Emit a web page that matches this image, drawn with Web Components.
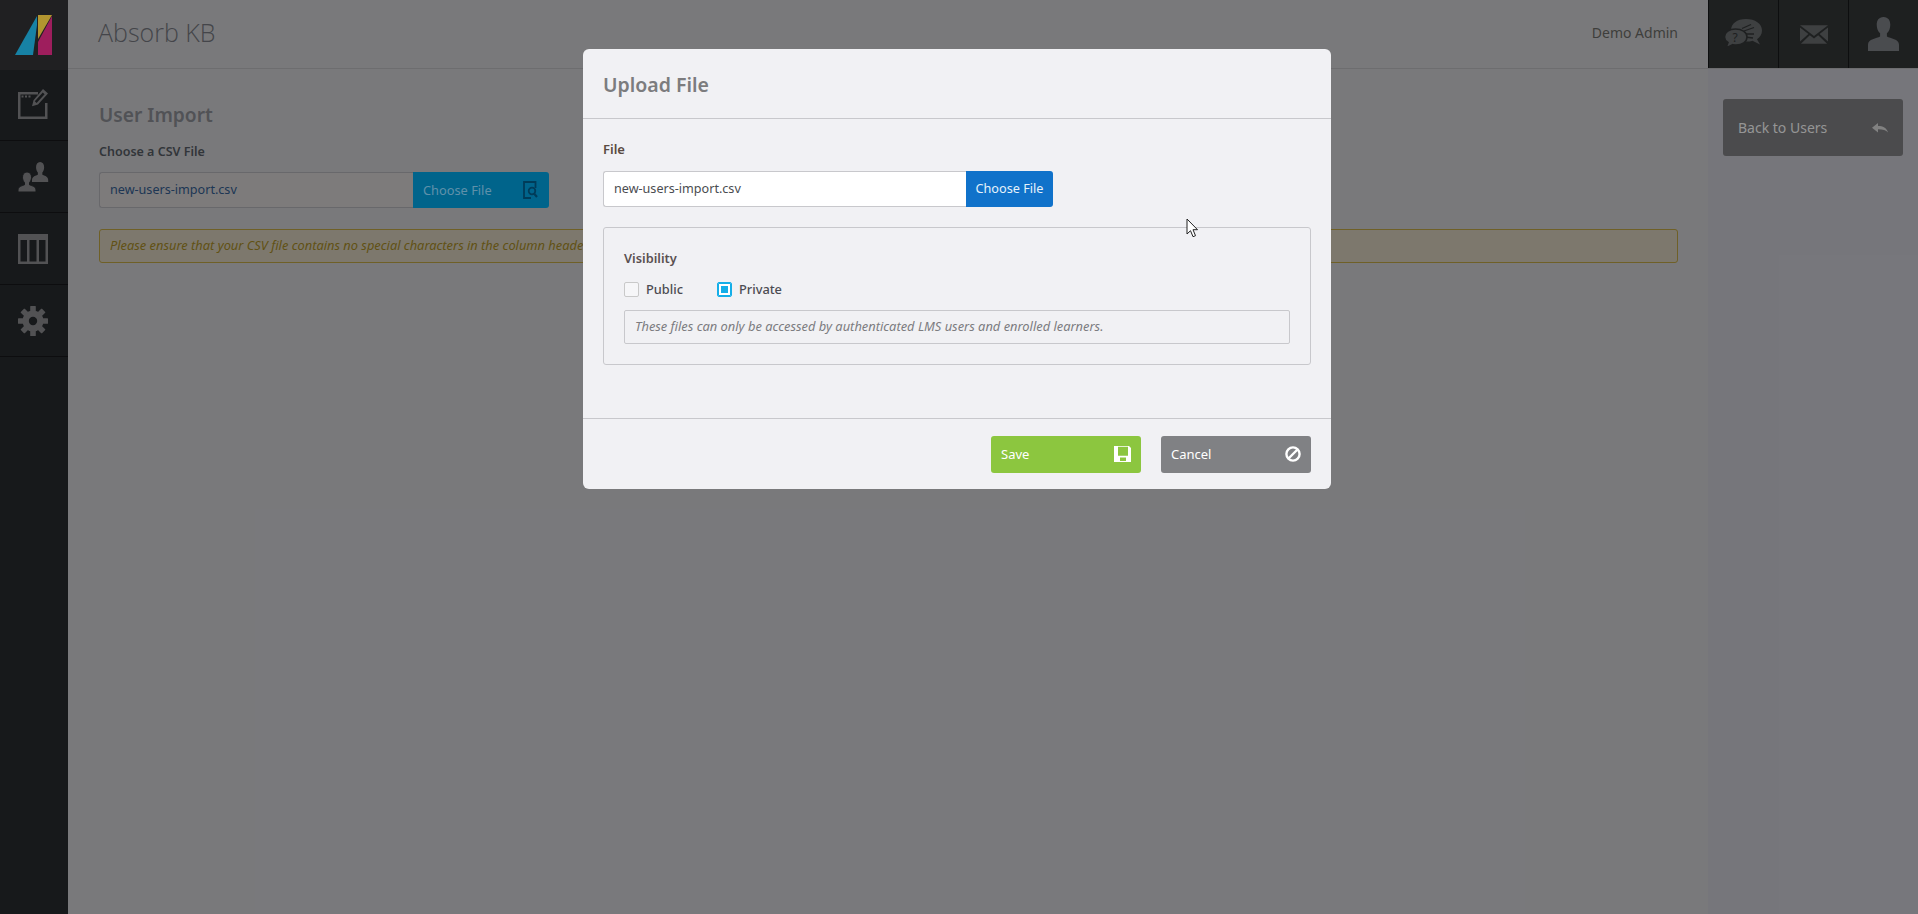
<!DOCTYPE html>
<html lang="en">
<head>
<meta charset="utf-8">
<title>Absorb KB - Upload File</title>
<style>
  html, body { margin: 0; height: 100%; overflow: hidden; background: #aeaeb1; }
  body { font-family: "Noto Sans", "Open Sans", sans-serif; }
</style>
</head>
<body>
<app-shell>
  <side-nav slot="nav"></side-nav>
  <top-bar slot="top"></top-bar>
  <user-import slot="main"></user-import>
  <back-panel slot="aside"></back-panel>
</app-shell>
<modal-dialog heading="Upload File">
  <file-field label="File" value="new-users-import.csv"></file-field>
  <visibility-box></visibility-box>
  <action-button slot="footer" kind="save">Save</action-button>
  <action-button slot="footer" kind="cancel">Cancel</action-button>
</modal-dialog>

<script>
const BUST = "M9 0c3 0 4.500 2.300 4.500 5.300 0 2.200-.8 4-2 5.200v2.300c2 1 6.500 1.500 6.500 5.200V20H0v-2c0-3.700 4.500-4.200 6.500-5.200v-2.300C5.300 9.300 4.500 7.500 4.500 5.300 4.500 2.300 6 0 9 0z";
const GEAR_TOOTH = `x="-2.800" y="-15" width="5.600" height="30" rx=".6"`;

const ICONS = {
  compose: `<svg width="30" height="30" viewBox="0 0 30 30"><path fill="#767679" d="M0 3h20v2.500H0zM0 3h2.500v27H0zM27 14h2.500v16H0v-2.500h27z"/><path fill="#767679" d="M3.500 6.500h2v2h-2zM7 6.500h2v2H7zM10.500 6.500h2v2h-2z"/><path fill="#767679" fill-rule="evenodd" d="M25 0l5 4.500-10 11-6 1.800 1.500-6zM24.800 3.500l-8 8.800 1.800 1.700 8-8.800z"/></svg>`,
  users: `<svg width="31" height="30" viewBox="0 0 31 30"><path fill="#767679" transform="translate(14 0) scale(.9 1)" d="${BUST}"/><path fill="#767679" stroke="#212427" stroke-width="1" transform="translate(0 10)" d="${BUST}"/></svg>`,
  columns: `<svg width="30" height="30" viewBox="0 0 30 30"><path fill="#767679" fill-rule="evenodd" d="M0 0h30v30H0zM2.500 6v21.500h6.500V6zM11.500 6v21.500h7V6zM21 6v21.500h6.500V6z"/></svg>`,
  gear: `<svg width="30" height="30" viewBox="-15 -15 30 30"><g fill="#767679"><rect ${GEAR_TOOTH}/><rect ${GEAR_TOOTH} transform="rotate(45)"/><rect ${GEAR_TOOTH} transform="rotate(90)"/><rect ${GEAR_TOOTH} transform="rotate(135)"/></g><circle r="10.500" fill="#767679"/><circle r="4.200" fill="#212427"/></svg>`,
  chat: `<svg width="40" height="30" viewBox="0 0 40 30"><path fill="#595c5e" d="M22 0c9 0 16 4.700 16 11.500 0 3.800-2 6.700-5 8.700l3 5.300-7.500-3.800c-2 .6-4 .9-6.500.9C13 22.600 7 18 7 11.500 7 4.700 13 0 22 0z"/><path stroke="#2c2e2f" stroke-width="1.300" d="M18 9.500l9-4M20 12l10-3.500M21 15h9M21 18l8 1" fill="none"/><path fill="#595c5e" stroke="#2c2e2f" stroke-width="1.500" d="M11.500 10C17.500 10 23 13 23 18c0 5-5 8-11 8-1 0-2.200-.1-3.200-.4L2 29l2-5.500C1.500 22 .5 20 .5 18c0-5 5-8 11-8z"/><text x="8.500" y="23" font-size="12" font-family="Noto Sans, sans-serif" fill="#2c2e2f">?</text></svg>`,
  mail: `<svg width="28" height="19" viewBox="0 0 30 20"><path fill="#595c5e" d="M0 0h30L15 11.500zM0 2.500l9 7L0 17.500zM30 2.500l-9 7 9 8zM10.500 10.800l4.500 3.500 4.500-3.500L29 20H1z"/></svg>`,
  user: `<svg width="31" height="34" viewBox="0 0 32 35"><path fill="#6b6e72" d="M16 0c5 0 7 3.800 7 8 0 3.700-1.300 6.800-3.500 8.800v3.200c3.500 2 12.500 2.500 12.500 8.500V35H0v-6.500C0 22.500 9 22 12.500 20v-3.200C10.300 14.800 9 11.700 9 8c0-4.200 2-8 7-8z"/></svg>`,
  back: `<svg width="16" height="10" viewBox="0 0 16 10"><path fill="#b9b9b9" d="M6 0v3c5 0 8.500 1.500 10 6.500C14 7 11 6.300 6 6.300V9.500L0 4.800z"/></svg>`,
  search: `<svg width="15" height="18" viewBox="0 0 15 18"><path fill="none" stroke="#005680" stroke-width="1.800" d="M12.500 7V1H1v16h7"/><circle cx="9" cy="10" r="3.300" fill="none" stroke="#005680" stroke-width="1.800"/><path stroke="#005680" stroke-width="2.200" d="M11 12.500l3 3.500"/></svg>`,
  save: `<svg width="17" height="16" viewBox="0 0 17 16"><path fill="#fff" fill-rule="evenodd" d="M0 0h15l2 2v14H0zM4 .8v9h10v-9zM6 11.500V15h6v-3.500z"/></svg>`,
  cancel: `<svg width="16" height="16" viewBox="0 0 16 16"><circle cx="8" cy="8" r="6.600" fill="none" stroke="#fff" stroke-width="2.400"/><path stroke="#fff" stroke-width="2.400" d="M3.500 12.500l9-9"/></svg>`,
};

class AppShell extends HTMLElement {
  constructor() {
    super();
    this.attachShadow({ mode: "open" });
    this.shadowRoot.innerHTML = `
      <style>
        :host { display: grid; grid-template-columns: 68px 1fr 210px; grid-template-rows: 69px 1fr; width: 1918px; height: 914px; }
        ::slotted([slot="nav"]) { grid-row: 1 / 3; }
        ::slotted([slot="top"]) { grid-column: 2 / 4; }
      </style>
      <slot name="nav"></slot>
      <slot name="top"></slot>
      <slot name="main"></slot>
      <slot name="aside"></slot>`;
  }
}

class SideNav extends HTMLElement {
  constructor() {
    super();
    this.attachShadow({ mode: "open" });
    this.shadowRoot.innerHTML = `
      <style>
        :host { display: flex; flex-direction: column; background: #212427; }
        .logo { height: 70px; flex: none; background: #2e2f31; display: flex; align-items: center; justify-content: center; }
        .item { height: 72px; flex: none; box-sizing: border-box; padding-right: 2px; border-bottom: 1px solid #131416; display: flex; align-items: center; justify-content: center; }
        .first { height: 71px; }
        .first svg { margin-top: -3px; }
      </style>
      <div class="logo">
        <svg width="38" height="40" viewBox="0 0 38 40">
          <path fill="#22baec" d="M22 1v9l-4 30H0z"/>
          <path fill="#ffd645" d="M23 0h14L23 24z"/>
          <path fill="#e22c86" d="M37 1v39H23V27z"/>
        </svg>
      </div>
      <div class="item first">${ICONS.compose}</div>
      <div class="item">${ICONS.users}</div>
      <div class="item">${ICONS.columns}</div>
      <div class="item">${ICONS.gear}</div>`;
  }
}

class TopBar extends HTMLElement {
  constructor() {
    super();
    this.attachShadow({ mode: "open" });
    this.shadowRoot.innerHTML = `
      <style>
        :host { display: flex; align-items: stretch; height: 69px; box-sizing: border-box; border-bottom: 1px solid #9c9c9f; background: #aeaeb1; }
        h1 { margin: 0 0 0 30px; flex: 1; font: 300 25px/64px "Open Sans", sans-serif; color: #62646a; }
        .who { font-size: 14px; line-height: 66px; color: #5a5a56; margin-right: 30px; }
        .tile { width: 70px; height: 68px; background: #2c2e2f; border-left: 1px solid #141516; box-sizing: border-box; display: flex; align-items: center; justify-content: center; }
        .tile:first-of-type { border-left: 0; }
      </style>
      <h1>Absorb KB</h1>
      <div class="who">Demo Admin</div>
      <div class="tile">${ICONS.chat}</div>
      <div class="tile">${ICONS.mail}</div>
      <div class="tile">${ICONS.user}</div>`;
  }
}

class UserImport extends HTMLElement {
  constructor() {
    super();
    this.attachShadow({ mode: "open" });
    this.shadowRoot.innerHTML = `
      <style>
        :host { display: block; padding: 32px 30px 0 31px; background: #aeaeb1; }
        h2 { margin: 0; font-size: 19.2px; line-height: 28px; font-weight: 600; color: #74767c; }
        label { display: block; margin-top: 13px; font-size: 12.5px; line-height: 20px; font-weight: 600; color: #484d53; }
        .row { display: flex; margin-top: 10px; height: 36px; }
        .val { width: 314px; box-sizing: border-box; background: #b4b1b1; border: 1px solid #96969a; border-right: 0; border-radius: 3px 0 0 3px; padding-left: 10px; font-size: 12.6px; line-height: 34px; color: #2b4e79; }
        .btn { width: 136px; background: #0090c8; border-radius: 0 3px 3px 0; display: flex; align-items: center; justify-content: space-between; padding: 0 11px 0 10px; box-sizing: border-box; font-size: 12.8px; color: #88cff3; }
        .btn svg { display: block; }
        .alert { margin-top: 21px; height: 34px; box-sizing: border-box; border: 1px solid #a08a38; border-radius: 3px; background: #b3ad9c; padding-left: 10px; font-size: 12.85px; line-height: 31px; font-style: italic; color: #8c7420; white-space: nowrap; overflow: hidden; }
      </style>
      <h2>User Import</h2>
      <label>Choose a CSV File</label>
      <div class="row">
        <div class="val">new-users-import.csv</div>
        <div class="btn">Choose File ${ICONS.search}</div>
      </div>
      <div class="alert">Please ensure that your CSV file contains no special characters in the column headers.</div>`;
  }
}

class BackPanel extends HTMLElement {
  constructor() {
    super();
    this.attachShadow({ mode: "open" });
    this.shadowRoot.innerHTML = `
      <style>
        :host { display: block; padding: 30px 15px 0 15px; background: #aaaab1; }
        .btn { height: 57px; border-radius: 3px; background: #6c6c6f; display: flex; align-items: center; justify-content: space-between; padding: 0 15px; box-sizing: border-box; font-size: 14px; color: #d6d6d6; }
      </style>
      <div class="btn"><span>Back to Users</span>${ICONS.back}</div>`;
  }
}

class FileField extends HTMLElement {
  constructor() {
    super();
    this.attachShadow({ mode: "open" });
    this.shadowRoot.innerHTML = `
      <style>
        :host { display: block; }
        label { display: block; font-size: 13px; line-height: 18px; font-weight: 600; color: #5a4a42; }
        .row { display: flex; margin-top: 13px; height: 36px; }
        .val { width: 363px; box-sizing: border-box; background: #fff; border: 1px solid #c8c8cc; border-right: 0; border-radius: 3px 0 0 3px; padding-left: 10px; font-size: 12.6px; line-height: 33px; color: #4a4c50; }
        .btn { width: 87px; background: #1072ca; border-radius: 0 3px 3px 0; text-align: center; font-size: 12.7px; line-height: 34px; color: #e6f2fb; }
      </style>
      <label>${this.getAttribute("label")}</label>
      <div class="row">
        <div class="val">${this.getAttribute("value")}</div>
        <div class="btn">Choose File</div>
      </div>`;
  }
}

class CheckOption extends HTMLElement {
  constructor() {
    super();
    this.attachShadow({ mode: "open" });
    this.shadowRoot.innerHTML = `
      <style>
        :host { display: inline-flex; align-items: center; gap: 7px; font-size: 12.8px; font-weight: 500; color: #4c4c52; }
        .box { width: 13px; height: 13px; border: 1px solid #c9c9c9; border-radius: 2px; background: #f6f6f8; box-sizing: content-box; display: flex; align-items: center; justify-content: center; }
        :host([checked]) .box { border: 1px solid #14aee8; box-shadow: inset 0 0 0 1px #14aee8; background: #fff; }
        :host([checked]) .box::after { content: ""; width: 7px; height: 7px; background: #14aee8; }
      </style>
      <span class="box"></span><slot></slot>`;
  }
}

class VisibilityBox extends HTMLElement {
  constructor() {
    super();
    this.attachShadow({ mode: "open" });
    this.shadowRoot.innerHTML = `
      <style>
        :host { display: block; margin-top: 20px; height: 138px; box-sizing: border-box; border: 1px solid #c8c8cc; border-radius: 3px; padding: 21px 20px 0 20px; }
        .title { font-size: 12.8px; line-height: 18px; font-weight: 600; color: #5a5050; }
        .opts { display: flex; gap: 34px; margin-top: 12px; height: 20px; align-items: center; }
        .note { margin-top: 11px; height: 34px; box-sizing: border-box; border: 1px solid #c8c8cc; border-radius: 2px; padding-left: 10px; font-size: 12.87px; line-height: 30px; font-style: italic; color: #7c7c80; }
      </style>
      <div class="title">Visibility</div>
      <div class="opts">
        <check-option>Public</check-option>
        <check-option checked>Private</check-option>
      </div>
      <div class="note">These files can only be accessed by authenticated LMS users and enrolled learners.</div>`;
  }
}

class ActionButton extends HTMLElement {
  constructor() {
    super();
    this.attachShadow({ mode: "open" });
    const kind = this.getAttribute("kind");
    this.shadowRoot.innerHTML = `
      <style>
        :host { display: flex; align-items: center; justify-content: space-between; width: 150px; height: 37px; box-sizing: border-box; padding: 0 10px 2px; border-radius: 3px; font-size: 13px; color: #fff; background: #8cc63f; }
        :host([kind="cancel"]) { background: #808184; }
        svg { display: block; }
      </style>
      <slot></slot>${ICONS[kind]}`;
  }
}

class ModalDialog extends HTMLElement {
  constructor() {
    super();
    this.attachShadow({ mode: "open" });
    this.shadowRoot.innerHTML = `
      <style>
        :host { position: absolute; inset: 0; display: block; background: rgba(0, 0, 0, .3); }
        .cursor { position: absolute; left: 1186px; top: 218px; }
        .dialog { position: absolute; left: 583px; top: 49px; width: 748px; height: 440px; display: flex; flex-direction: column; background: #f1f1f4; border-radius: 6px; overflow: hidden; }
        header { height: 70px; flex: none; box-sizing: border-box; border-bottom: 1px solid #c8c8cc; padding: 0 20px; font-size: 19.5px; line-height: 71px; font-weight: 600; color: #7c7c7e; }
        .body { flex: 1; padding: 21px 20px 0 20px; }
        footer { height: 71px; flex: none; box-sizing: border-box; border-top: 1px solid #c8c8cc; display: flex; justify-content: flex-end; gap: 20px; padding: 17px 20px 0 0; }
      </style>
      <div class="dialog">
        <header>${this.getAttribute("heading")}</header>
        <div class="body"><slot></slot></div>
        <footer><slot name="footer"></slot></footer>
      </div>
      <svg class="cursor" width="13" height="20" viewBox="0 0 13 20"><path fill="#fff" stroke="#222" stroke-width="1" d="M1 1v15l3.500-3.300 2.500 6 2.500-1-2.500-6h4.500z"/></svg>`;
  }
}

customElements.define("app-shell", AppShell);
customElements.define("side-nav", SideNav);
customElements.define("top-bar", TopBar);
customElements.define("user-import", UserImport);
customElements.define("back-panel", BackPanel);
customElements.define("file-field", FileField);
customElements.define("check-option", CheckOption);
customElements.define("visibility-box", VisibilityBox);
customElements.define("action-button", ActionButton);
customElements.define("modal-dialog", ModalDialog);
</script>
</body>
</html>
